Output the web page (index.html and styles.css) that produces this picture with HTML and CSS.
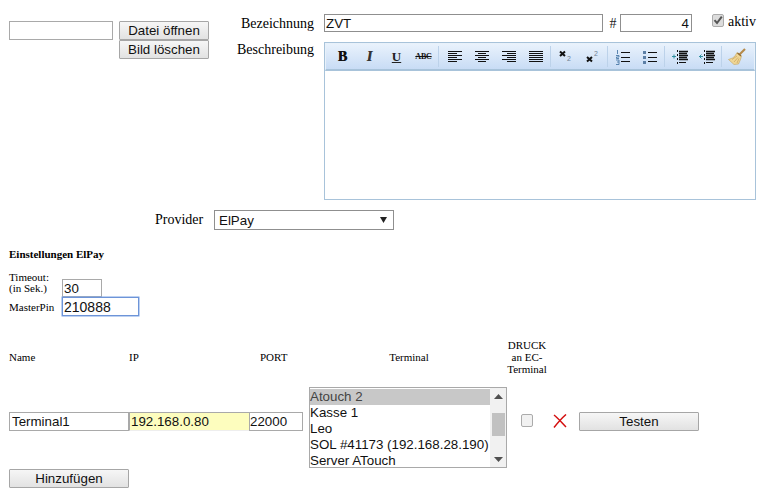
FILE: index.html
```html
<!DOCTYPE html>
<html lang="de">
<head>
<meta charset="utf-8">
<title>ZVT</title>
<link rel="stylesheet" href="styles.css">
</head>
<body>
<section class="top">
  <div class="image-col">
    <input class="field file-path" type="text">
    <div class="image-buttons">
      <button class="btn btn-file">Datei öffnen</button>
      <button class="btn btn-file">Bild löschen</button>
    </div>
  </div>
  <div class="form-col">
    <div class="name-row">
      <label class="label name-label">Bezeichnung</label>
      <input class="field-dark name-input" type="text" value="ZVT">
      <span class="hash">#</span>
      <input class="field-dark num-input" type="text" value="4">
      <span class="check-wrap">
        <span class="check on"><svg viewBox="0 0 12 12" width="12" height="12"><path d="M2.500 6.200 5 9 9.800 2.600" fill="none" stroke="#555" stroke-width="2"/></svg></span>
        <span class="label">aktiv</span>
      </span>
    </div>
    <div class="desc-row">
      <label class="label desc-label">Beschreibung</label>
      <div class="editor">
        <div class="toolbar">
          <span class="tool tool-text bold">B</span>
          <span class="tool tool-text italic">I</span>
          <span class="tool tool-text under">U</span>
          <span class="tool tool-text strike">ABC</span>
          <span class="sep sep-wide"></span>
          <span class="tool"><svg width="16" height="16" viewBox="0 0 16 16"><path d="M1 2.500h14M1 4.500h9M1 6.500h14M1 8.500h9M1 10.500h14M1 12.500h9" stroke="#111"/></svg></span>
          <span class="tool"><svg width="16" height="16" viewBox="0 0 16 16"><path d="M1 2.500h14M4 4.500h8M1 6.500h14M4 8.500h8M1 10.500h14M4 12.500h8" stroke="#111"/></svg></span>
          <span class="tool"><svg width="16" height="16" viewBox="0 0 16 16"><path d="M1 2.500h14M6 4.500h9M1 6.500h14M6 8.500h9M1 10.500h14M6 12.500h9" stroke="#111"/></svg></span>
          <span class="tool"><svg width="16" height="16" viewBox="0 0 16 16"><path d="M1 2.500h14M1 4.500h14M1 6.500h14M1 8.500h14M1 10.500h14M1 12.500h14" stroke="#111"/></svg></span>
          <span class="sep"></span>
          <span class="tool"><svg width="16" height="16" viewBox="0 0 16 16"><path d="M2 2.500l5 4.500M7 2.500l-5 4.500" stroke="#111" stroke-width="2"/><text class="script-digit" x="9" y="12">2</text></svg></span>
          <span class="tool"><svg width="16" height="16" viewBox="0 0 16 16"><path d="M2 8l5 4.500M7 8l-5 4.500" stroke="#111" stroke-width="2"/><text class="script-digit" x="9" y="7">2</text></svg></span>
          <span class="sep"></span>
          <span class="tool"><svg width="16" height="16" viewBox="0 0 16 16"><path d="M6 3.500h9M6 8.500h9M6 12.500h9" stroke="#111"/><path d="M2.500 1v4M1 6.500h3v1.500H1.500v1.500H4M1 11h3v4.500H1M2 13h2" fill="none" stroke="#4c7aa8" stroke-width=".9"/></svg></span>
          <span class="tool"><svg width="16" height="16" viewBox="0 0 16 16"><path d="M6 3.500h9M6 8.500h9M6 12.500h9" stroke="#111"/><path d="M1 2h3v3H1zM1 7h3v3H1zM1 12h3v3H1z" fill="#5b7fa6"/></svg></span>
          <span class="sep"></span>
          <span class="tool"><svg width="16" height="16" viewBox="0 0 16 16"><path d="M7 2.500h9M7 4.500h8M7 6.500h9M7 8.500h8M7 10.500h9" stroke="#111" stroke-width="1.300"/><path d="M5.500 1v2M5.500 5v2M5.500 9v2M5.500 13v2M7 13.500h7" stroke="#111"/><path d="M0 7.500h4M2 5.500v4" fill="none" stroke="#2f8f9f"/></svg></span>
          <span class="tool"><svg width="16" height="16" viewBox="0 0 16 16"><path d="M7 2.500h9M7 4.500h8M7 6.500h9M7 8.500h8M7 10.500h9" stroke="#111" stroke-width="1.300"/><path d="M5.500 1v2M5.500 5v2M5.500 9v2M5.500 13v2M7 13.500h7" stroke="#111"/><path d="M0 7.500h4M2.500 5.500l-2 2 2 2" fill="none" stroke="#2f8f9f"/></svg></span>
          <span class="sep"></span>
          <span class="tool"><svg width="18" height="17" viewBox="0 0 18 17"><path d="M11.500 6.500 17 1" stroke="#b58a4a" stroke-width="2.200"/><path d="M9 4.500l4.500 3.500-1 3.500-2 4.500-4.500.5-5.500-5 4-1.500 2.500-2z" fill="#efd695" stroke="#c4a25f" stroke-width=".6"/><path d="M9.500 5l3.500 3" stroke="#8f6a30" stroke-width="1.300"/><path d="M9 8 4 11.500M10 9.500l-4 4.500M11 10.500 9 15" stroke="#c9a25d" stroke-width=".7"/></svg></span>
        </div>
        <div class="editor-body"></div>
      </div>
    </div>
  </div>
</section>

<div class="provider-row">
  <label class="label provider-label">Provider</label>
  <div class="select-wrap">
    <select class="provider-select"><option>ElPay</option></select>
    <svg class="select-arrow" width="7" height="6" viewBox="0 0 7 6"><path d="M0 0h7L3.500 6z" fill="#222"/></svg>
  </div>
</div>

<h2 class="settings-title">Einstellungen ElPay</h2>

<div class="settings">
  <span class="small timeout-label">Timeout:<br>(in Sek.)</span>
  <input class="field timeout-input" type="text" value="30">
  <span class="small pin-label">MasterPin</span>
  <input class="field pin-input" type="text" value="210888">
</div>

<div class="terminals">
  <div class="small">Name</div>
  <div class="small">IP</div>
  <div class="small head-port">PORT</div>
  <div class="small center head-terminal">Terminal</div>
  <div class="small center">DRUCK<br>an EC-<br>Terminal</div>
  <div></div>
  <div></div>

  <input class="field cell-input name-cell" type="text" value="Terminal1">
  <input class="field cell-input ip-input" type="text" value="192.168.0.80">
  <input class="field cell-input port-cell" type="text" value="22000">
  <div class="listbox">
    <div class="options">
      <div class="option selected">Atouch 2</div>
      <div class="option">Kasse 1</div>
      <div class="option">Leo</div>
      <div class="option">SOL #41173 (192.168.28.190)</div>
      <div class="option">Server ATouch</div>
    </div>
    <div class="scrollbar">
      <svg width="9" height="5" viewBox="0 0 9 5"><path d="M0 5h9L4.500 0z" fill="#505050"/></svg>
      <div class="thumb"></div>
      <svg width="9" height="5" viewBox="0 0 9 5"><path d="M0 0h9L4.500 5z" fill="#505050"/></svg>
    </div>
  </div>
  <div class="print-cell"><span class="check"></span></div>
  <div class="delete-cell"><svg width="14" height="14" viewBox="0 0 14 14"><path d="M1 1c4 3 8 8 12 12M13 .5C9 4 5 8.500 1 13.500" fill="none" stroke="#d40f0f" stroke-width="1.500"/></svg></div>
  <button class="btn btn-wide test-btn">Testen</button>
</div>

<button class="btn btn-wide btn-add">Hinzufügen</button>
</body>
</html>
```
FILE: styles.css
```css
* { box-sizing: border-box; }
html, body { margin: 0; padding: 0; }
body {
  width: 766px;
  height: 493px;
  overflow: hidden;
  background: #fff;
  font-family: "Liberation Serif", serif;
  font-size: 14px;
  color: #000;
  padding: 14px 10px 0 9px;
}
input, select, button { font-family: "Liberation Sans", Arial, sans-serif; font-size: 13.33px; color: #111; margin: 0; outline: none; }
.top { display: flex; }
.image-col { display: flex; width: 200px; padding-top: 7px; gap: 6px; flex: none; }
.field { border: 1px solid #a9a9a9; background: #fff; padding: 0 1px; height: 19px; border-radius: 0; }
.field-dark { border: 1px solid #8f8f8f; background: #fff; padding: 0 1px; height: 18px; border-radius: 0; }
.file-path { width: 104px; }
.image-buttons { display: flex; flex-direction: column; width: 90px; }
.btn {
  height: 19px;
  border: 1px solid #a6a6a6;
  border-radius: 1px;
  background: linear-gradient(#f6f6f6, #e2e2e2);
  padding: 0;
  text-align: center;
}
.btn-file { width: 90px; height: 19px; line-height: 16px; }
.form-col { width: 547px; flex: none; }
.name-row { display: flex; align-items: flex-start; height: 28px; }
.label { font-size: 14px; line-height: 16px; }
.name-label, .desc-label { width: 105px; text-align: right; flex: none; }
.name-label { padding-top: 2px; height: 18px; line-height: 16px; }
.name-input { width: 279px; margin-left: 10px; }
.hash { width: 17px; padding-left: 3px; text-align: center; font-size: 14px; line-height: 20px; color: #222; }
.num-input { width: 72px; text-align: right; padding-right: 2px; }
.check-wrap { display: flex; gap: 4px; margin-left: 20px; }
.check {
  display: block;
  width: 12px; height: 13px;
  border: 1px solid #ababab;
  border-radius: 2px;
  background: #f1f1f1;
}
.check.on { background: #dcdcdc; }
.check.on svg { display: block; margin: -1px 0 0 -1px; }
.desc-row { display: flex; align-items: flex-start; }
.editor { width: 432px; height: 158px; border: 1px solid #a8c3da; margin-left: 10px; display: flex; flex-direction: column; }
.toolbar {
  height: 28px;
  padding: 0 0 0 3px;
  border: 1px solid #e8f1fa;
  border-bottom: 2px solid #a8c3da;
  background: linear-gradient(#e9f2fc, #c8dcf5);
  display: flex;
  align-items: center;
}
.editor-body { flex: 1; background: #fff; }
.tool { width: 27px; height: 16px; display: flex; justify-content: center; align-items: center; flex: none; color: #111; }
.tool-text { font-family: "Liberation Serif", serif; line-height: 16px; font-weight: bold; }
.bold { font-size: 14px; text-shadow: .5px 0 0 #111; }
.italic { font-style: italic; font-size: 14px; color: #333; text-shadow: .5px 0 0 #555; }
.under { text-decoration: underline; font-size: 13px; color: #222; }
.strike { text-decoration: line-through; font-size: 8px; letter-spacing: -.2px; }
.script-digit { font-family: "Liberation Sans", sans-serif; font-size: 7px; fill: #6f8193; }
.sep { width: 1px; height: 21px; background: #bcd2ea; flex: none; margin: 0 1px; }
.sep-wide { margin-right: 2px; }
.provider-row { display: flex; align-items: center; margin-top: 10px; padding-left: 146px; height: 20px; }
.provider-label { width: 59px; flex: none; }
.select-wrap { position: relative; width: 180px; height: 20px; }
.provider-select {
  appearance: none;
  -webkit-appearance: none;
  width: 180px; height: 20px;
  border: 1px solid #8f8f8f;
  border-radius: 0;
  background: #fff;
  padding: 0 0 0 4px;
}
.select-arrow { position: absolute; right: 7px; top: 7px; }
.settings-title { margin: 18px 0 0; font-size: 11px; font-weight: bold; line-height: 12px; }
.small { font-size: 11px; line-height: 12px; }
.settings {
  display: grid;
  grid-template-columns: 53px auto;
  justify-content: start;
  margin-top: 12px;
  align-items: end;
}
.timeout-label { height: 25px; line-height: 11px; align-self: start; }
.timeout-input { width: 40px; height: 18px; padding: 0 1px; }
.pin-label { align-self: center; }
.pin-input { width: 77px; height: 19px; font-size: 14px; border-color: #6d94d8; box-shadow: 0 0 0 .5px #7da3e4; }
.terminals {
  display: grid;
  grid-template-columns: 120px 121px 53px 204px 40px 32px 120px;
  grid-template-rows: 44px 81px;
  row-gap: 8px;
  align-items: center;
  margin-top: 19px;
}
.head-port { padding-left: 10px; }
.center { text-align: center; }
.head-terminal { padding-left: 8px; }
.cell-input { width: 100%; height: 19px; align-self: start; margin-top: 25px; }
.name-cell { padding: 0 1px 0 2px; }
.port-cell { padding: 0; margin-left: -1px; width: 54px; }
.ip-input {
  background: #fdfdbe;
  border: 1px solid #fdfdbe;
  border-top: 1px solid #a9a9a9;
  border-left: 1px solid #a9a9a9;
  border-bottom: 1px solid #eeeeee;
}
.listbox {
  width: 198px;
  height: 81px;
  margin-left: 6px;
  border: 1px solid #a9a9a9;
  display: flex;
  font-family: "Liberation Sans", Arial, sans-serif;
  font-size: 13.33px;
  color: #111;
  overflow: hidden;
}
.options { width: 180px; flex: none; padding-top: 1px; white-space: nowrap; }
.option { height: 16px; line-height: 16px; }
.option.selected { background: #c8c8c8; color: #444; }
.scrollbar {
  flex: 1;
  background: #f1f1f1;
  display: flex;
  flex-direction: column;
  align-items: center;
  padding: 6px 0 5px;
}
.thumb { width: 13px; height: 23px; background: #c1c1c1; margin: 14px 0 auto; }
.print-cell { display: flex; justify-content: center; align-self: start; margin-top: 27px; }
.delete-cell { padding-left: 6px; align-self: start; margin-top: 27px; }
.delete-cell svg { display: block; }
.btn-wide { width: 120px; height: 19px; line-height: 16px; }
.test-btn { align-self: start; margin-top: 25px; }
.btn-add { display: block; margin-top: 1px; }
```
